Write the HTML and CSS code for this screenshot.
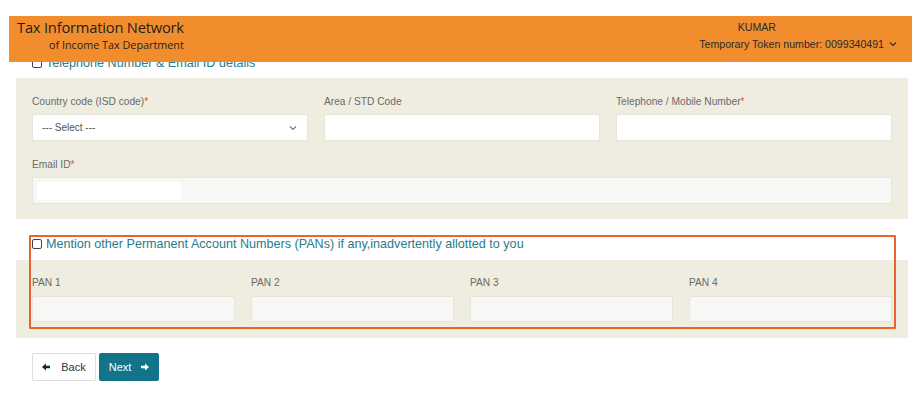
FILE: index.html
```html
<!DOCTYPE html>
<html lang="en">
<head>
    <meta charset="UTF-8">
    <meta name="viewport" content="width=device-width, initial-scale=1.0">
    <title>Tax Information Network</title>
    <link rel="stylesheet" href="styles.css">
</head>
<body>
    <header class="topbar">
        <div class="brand">
            <div class="brand-title">Tax Information Network</div>
            <div class="brand-sub">of Income Tax Department</div>
        </div>
        <div class="user">
            <div class="user-name">KUMAR</div>
            <div class="user-token">
                Temporary Token number: 0099340491
                <svg class="chev" width="8" height="6" viewBox="0 0 8 6"><path d="M1 1.5 L4 4.5 L7 1.5" fill="none" stroke="#333" stroke-width="1.2"/></svg>
            </div>
        </div>
    </header>

    <main class="page">
        <div class="check-row check-row--top">
            <span class="box"></span>
            <span>Telephone Number &amp; Email ID details</span>
        </div>

        <section class="panel">
            <div class="grid3">
                <div class="field">
                    <div class="label">Country code (ISD code)<span class="req">*</span></div>
                    <div class="input select">
                        <span>--- Select ---</span>
                        <svg width="8" height="6" viewBox="0 0 8 6"><path d="M1 1.5 L4 4.5 L7 1.5" fill="none" stroke="#777" stroke-width="1.1"/></svg>
                    </div>
                </div>
                <div class="field">
                    <div class="label">Area / STD Code</div>
                    <div class="input"></div>
                </div>
                <div class="field">
                    <div class="label">Telephone / Mobile Number<span class="req">*</span></div>
                    <div class="input"></div>
                </div>
            </div>
            <div class="field field--email">
                <div class="label">Email ID<span class="req">*</span></div>
                <div class="input input--soft"><span class="autofill"></span></div>
            </div>
        </section>

        <section class="pan-block">
            <div class="check-row check-row--pan">
                <span class="box"></span>
                <span>Mention other Permanent Account Numbers (PANs) if any,inadvertently allotted to you</span>
            </div>
            <div class="panel panel--pan">
                <div class="grid4">
                    <div class="field">
                        <div class="label">PAN 1</div>
                        <div class="input input--soft input--short"></div>
                    </div>
                    <div class="field">
                        <div class="label">PAN 2</div>
                        <div class="input input--soft input--short"></div>
                    </div>
                    <div class="field">
                        <div class="label">PAN 3</div>
                        <div class="input input--soft input--short"></div>
                    </div>
                    <div class="field">
                        <div class="label">PAN 4</div>
                        <div class="input input--soft input--short"></div>
                    </div>
                </div>
            </div>
            <div class="highlight"></div>
        </section>

        <div class="actions">
            <button class="btn btn-back">
                <svg width="8" height="8" viewBox="0 0 8 8"><path d="M0 4 L4 0.5 L4 2.8 L8 2.8 L8 5.2 L4 5.2 L4 7.5 Z" fill="#222"/></svg>
                Back
            </button>
            <button class="btn btn-next">
                Next
                <svg width="8" height="8" viewBox="0 0 8 8"><path d="M8 4 L4 0.5 L4 2.8 L0 2.8 L0 5.2 L4 5.2 L4 7.5 Z" fill="#fff"/></svg>
            </button>
        </div>
    </main>
</body>
</html>
```

FILE: styles.css
```css
body {
    margin: 0;
    background: #fff;
    font-family: "Liberation Sans", Arial, sans-serif;
    color: #333;
}

.topbar {
    position: fixed;
    top: 16px;
    left: 9px;
    width: 903px;
    height: 46px;
    background: #f28d2d;
    display: flex;
    justify-content: space-between;
    box-sizing: border-box;
    padding: 0 15px 0 8px;
    z-index: 10;
}

.brand {
    font-family: "Open Sans", sans-serif;
    color: #1e1e1e;
    padding-top: 2px;
}

.brand-title {
    font-size: 14.7px;
    line-height: 19px;
    letter-spacing: -0.2px;
}

.brand-sub {
    font-size: 10.8px;
    line-height: 15px;
    padding-left: 32px;
}

.user {
    display: flex;
    flex-direction: column;
    align-items: flex-end;
    font-size: 10.6px;
    color: #2a2a2a;
    padding-top: 5px;
}

.user-name {
    line-height: 13px;
    margin-right: 121px;
}

.user-token {
    line-height: 16px;
    margin-top: 2px;
    display: flex;
    align-items: center;
    gap: 5px;
}

.page {
    width: 892px;
    margin-left: 16px;
    padding-top: 55px;
}

.check-row {
    display: flex;
    align-items: center;
    gap: 4px;
    padding-left: 16px;
    font-size: 12.6px;
    line-height: 16px;
    color: #2b7b89;
}

.check-row--top {
    margin-bottom: 7px;
}

.check-row--pan {
    padding-top: 3px;
    padding-bottom: 8px;
}

.box {
    width: 8px;
    height: 8px;
    border: 1px solid #444;
    border-radius: 2px;
    background: #fff;
    flex-shrink: 0;
}

.panel {
    background: #efede0;
    padding: 16px 16px 15px;
}

.panel--pan {
    padding: 15px 16px 16px;
}

.grid3 {
    display: grid;
    grid-template-columns: repeat(3, 1fr);
    column-gap: 16px;
}

.grid4 {
    display: grid;
    grid-template-columns: repeat(4, 1fr);
    column-gap: 16px;
}

.field--email {
    margin-top: 16px;
}

.label {
    font-size: 10.2px;
    line-height: 14px;
    padding-top: 1px;
    color: #6a6a6a;
    margin-bottom: 5px;
}

.panel--pan .label {
    margin-bottom: 6px;
}

.req {
    color: #d9534f;
}

.input {
    height: 27px;
    box-sizing: border-box;
    background: #fff;
    border: 1px solid #e6e5dc;
    border-radius: 2px;
}

.input--soft {
    background: #f7f7f6;
}

.input--short {
    height: 26px;
}

.select {
    display: flex;
    align-items: center;
    justify-content: space-between;
    padding: 0 10px 0 9px;
    font-size: 10px;
    color: #555;
}

.autofill {
    display: block;
    width: 144px;
    height: 18px;
    margin: 4px 0 0 4px;
    background: #fff;
}

.pan-block {
    position: relative;
    margin-top: 14px;
}

.highlight {
    position: absolute;
    left: 13px;
    top: 2px;
    width: 867px;
    height: 94px;
    box-sizing: border-box;
    border: 2px solid #e8662b;
    border-radius: 1px;
}

.actions {
    display: flex;
    gap: 3px;
    margin-top: 15px;
    padding-left: 16px;
}

.btn {
    height: 28px;
    display: flex;
    align-items: center;
    justify-content: center;
    font-family: "Liberation Sans", Arial, sans-serif;
    font-size: 11px;
    border-radius: 2px;
    cursor: pointer;
    padding: 0;
}

.btn-back {
    width: 64px;
    gap: 11px;
    background: #fff;
    color: #333;
    border: 1px solid #dedede;
}

.btn-next {
    width: 60px;
    gap: 10px;
    background: #117489;
    color: #fff;
    border: none;
}
```
